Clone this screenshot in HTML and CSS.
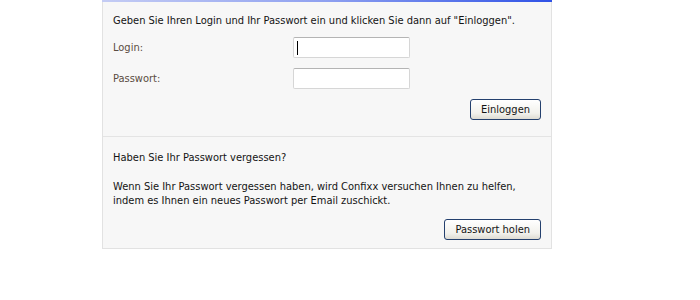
FILE: index.html
```html
<!DOCTYPE html>
<html lang="de">
<head>
<meta charset="utf-8">
<title>Login</title>
<link rel="stylesheet" href="styles.css">
</head>
<body>
<div class="panel">
  <div class="section login">
    <p class="intro">Geben Sie Ihren Login und Ihr Passwort ein und klicken Sie dann auf "Einloggen".</p>
    <div class="form">
      <label class="label" for="login">Login:</label>
      <div class="field focused" id="login"><span class="caret"></span></div>
      <label class="label" for="pw">Passwort:</label>
      <div class="field" id="pw"></div>
    </div>
    <div class="actions"><button class="btn">Einloggen</button></div>
  </div>
  <div class="section forgot">
    <p class="q">Haben Sie Ihr Passwort vergessen?</p>
    <p class="info">Wenn Sie Ihr Passwort vergessen haben, wird Confixx versuchen Ihnen zu helfen,<br>indem es Ihnen ein neues Passwort per Email zuschickt.</p>
    <div class="actions"><button class="btn">Passwort holen</button></div>
  </div>
</div>
</body>
</html>
```
FILE: styles.css
```css
html, body {
  margin: 0;
  padding: 0;
  background: #ffffff;
}
body {
  font-family: "DejaVu Sans Condensed", "DejaVu Sans", sans-serif;
  font-size: 11px;
  color: #141414;
}
.panel {
  margin-left: 102px;
  width: 448px;
  background: #f7f7f7;
  border: 1px solid #e2e2e2;
  border-top: 2px solid #6f86ee;
  position: relative;
}
.panel::before {
  content: "";
  position: absolute;
  left: -1px;
  right: -1px;
  top: -2px;
  height: 2px;
  background: linear-gradient(to right, #c4ccf4, #8ea0f0 50%, #2f52e6);
}
.section {
  padding: 0 10px;
}
.login {
  padding-top: 12px;
  padding-bottom: 16px;
}
.forgot {
  border-top: 1px solid #e4e4e4;
  padding-top: 14px;
  padding-bottom: 8px;
}
p {
  margin: 0;
  line-height: 14px;
}
.intro {
  margin-bottom: 9px;
}
.form {
  display: grid;
  grid-template-columns: 180px 117px;
  row-gap: 10px;
  align-items: center;
}
.label {
  color: #5a4c42;
}
.field {
  box-sizing: border-box;
  height: 21px;
  background: #fff;
  border: 1px solid #d6d6d6;
  border-top-color: #b4b4b4;
  border-radius: 2px;
  display: flex;
  align-items: center;
  padding-left: 3px;
}
.caret {
  width: 1px;
  height: 14px;
  background: #000;
}
.actions {
  display: flex;
  justify-content: flex-end;
  margin-top: 10px;
}
.forgot .actions {
  margin-top: 11px;
}
.q {
  margin-bottom: 15px;
}
.btn {
  font: inherit;
  color: #141414;
  height: 21px;
  padding: 0 10px;
  border: 1px solid #24406e;
  border-radius: 3px;
  background: linear-gradient(to bottom, #ffffff, #f2f1ec 70%, #dedbd2);
  line-height: 19px;
}
```
